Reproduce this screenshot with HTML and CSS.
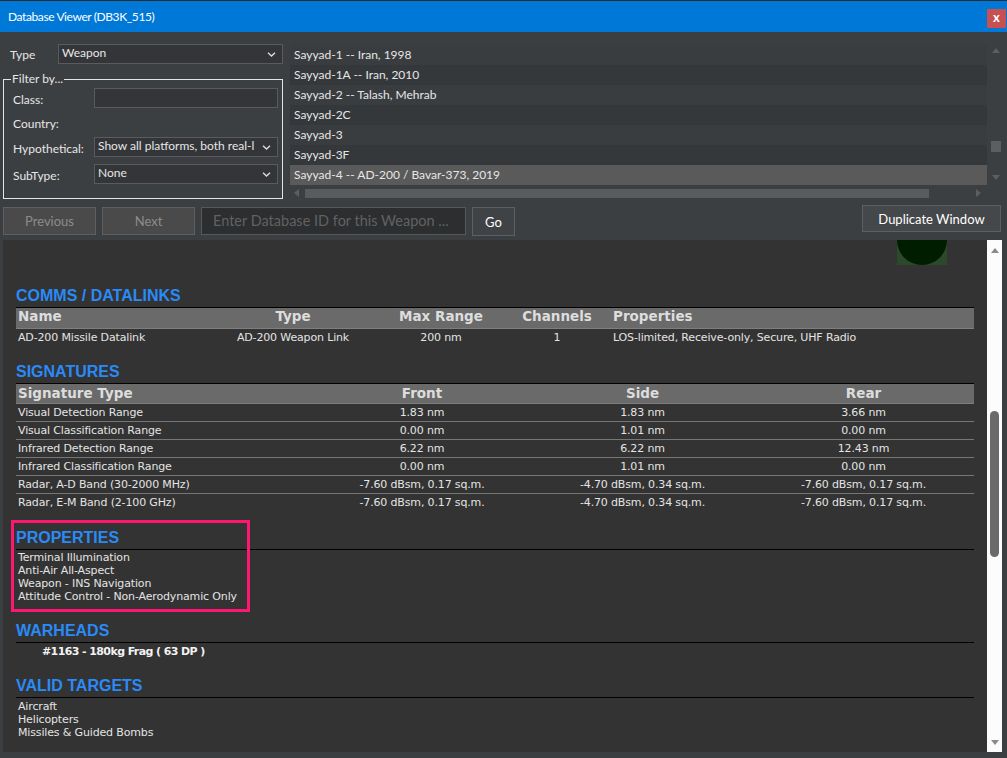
FILE: index.html
```html
<!DOCTYPE html>
<html>
<head>
    <title>Database Viewer (DB3K_515)</title>
    <link rel="stylesheet" href="styles.css">
</head>
<body>

<div class="window">
  <header class="titlebar">
    <span class="title">Database Viewer (DB3K_515)</span>
    <span class="close">x</span>
  </header>

  <section class="top">
    <div class="filters">
      <div class="type-row">
        <label>Type</label>
        <div class="combo">
          <span class="combo-text">Weapon</span>
          <svg class="chev" width="9" height="5" viewBox="0 0 9 5"><polyline points="1,0.8 4.5,4 8,0.8" fill="none" stroke="#dcdcdc" stroke-width="1.4"/></svg>
        </div>
      </div>

      <fieldset class="filter-box">
        <legend>Filter by...</legend>
        <div class="filter-grid">
          <label>Class:</label>
          <div class="field"></div>
          <label class="plain-label">Country:</label>
          <div></div>
          <label>Hypothetical:</label>
          <div class="combo">
            <span class="combo-text">Show all platforms, both real-l</span>
            <svg class="chev" width="9" height="5" viewBox="0 0 9 5"><polyline points="1,0.8 4.5,4 8,0.8" fill="none" stroke="#dcdcdc" stroke-width="1.4"/></svg>
          </div>
          <label>SubType:</label>
          <div class="combo">
            <span class="combo-text">None</span>
            <svg class="chev" width="9" height="5" viewBox="0 0 9 5"><polyline points="1,0.8 4.5,4 8,0.8" fill="none" stroke="#dcdcdc" stroke-width="1.4"/></svg>
          </div>
        </div>
      </fieldset>
    </div>

    <div class="list">
      <div class="list-main">
        <ul class="items">
          <li>Sayyad-1 -- Iran, 1998</li>
          <li>Sayyad-1A -- Iran, 2010</li>
          <li>Sayyad-2 -- Talash, Mehrab</li>
          <li>Sayyad-2C</li>
          <li>Sayyad-3</li>
          <li>Sayyad-3F</li>
          <li class="selected">Sayyad-4 -- AD-200 / Bavar-373, 2019</li>
        </ul>
        <div class="vbar">
          <span class="tri tri-up"></span>
          <span class="vthumb"></span>
          <span class="tri tri-down"></span>
        </div>
      </div>
      <div class="hbar">
        <span class="tri tri-left"></span>
        <span class="hthumb"></span>
        <span class="tri tri-right"></span>
      </div>
    </div>
  </section>

  <nav class="nav-row">
    <button class="btn btn-off">Previous</button>
    <button class="btn btn-off">Next</button>
    <div class="id-input">Enter Database ID for this Weapon ...</div>
    <button class="btn btn-go">Go</button>
    <button class="btn btn-dup">Duplicate Window</button>
  </nav>

  <section class="report">
    <div class="report-body">
      <div class="stub">
        <svg width="50" height="25" viewBox="0 0 50 25"><rect width="50" height="25" fill="#2c492c"/><circle cx="25" cy="0" r="25" fill="#001d00"/></svg>
      </div>

      <h3 class="sec-head first">COMMS / DATALINKS</h3>
      <table class="grid comms">
        <colgroup><col style="width:194px"><col style="width:166px"><col style="width:130px"><col style="width:102px"><col></colgroup>
        <tr><th class="left">Name</th><th>Type</th><th>Max Range</th><th>Channels</th><th class="left props">Properties</th></tr>
        <tr><td class="left">AD-200 Missile Datalink</td><td>AD-200 Weapon Link</td><td>200 nm</td><td>1</td><td class="left props">LOS-limited, Receive-only, Secure, UHF Radio</td></tr>
      </table>

      <h3 class="sec-head">SIGNATURES</h3>
      <table class="grid sig">
        <colgroup><col style="width:296px"><col style="width:220px"><col style="width:221px"><col></colgroup>
        <tr><th class="left">Signature Type</th><th>Front</th><th>Side</th><th>Rear</th></tr>
        <tr><td class="left">Visual Detection Range</td><td>1.83 nm</td><td>1.83 nm</td><td>3.66 nm</td></tr>
        <tr><td class="left">Visual Classification Range</td><td>0.00 nm</td><td>1.01 nm</td><td>0.00 nm</td></tr>
        <tr><td class="left">Infrared Detection Range</td><td>6.22 nm</td><td>6.22 nm</td><td>12.43 nm</td></tr>
        <tr><td class="left">Infrared Classification Range</td><td>0.00 nm</td><td>1.01 nm</td><td>0.00 nm</td></tr>
        <tr><td class="left">Radar, A-D Band (30-2000 MHz)</td><td>-7.60 dBsm, 0.17 sq.m.</td><td>-4.70 dBsm, 0.34 sq.m.</td><td>-7.60 dBsm, 0.17 sq.m.</td></tr>
        <tr><td class="left">Radar, E-M Band (2-100 GHz)</td><td>-7.60 dBsm, 0.17 sq.m.</td><td>-4.70 dBsm, 0.34 sq.m.</td><td>-7.60 dBsm, 0.17 sq.m.</td></tr>
      </table>

      <h3 class="sec-head">PROPERTIES</h3>
      <ul class="plain props-list">
        <li>Terminal Illumination</li>
        <li>Anti-Air All-Aspect</li>
        <li>Weapon - INS Navigation</li>
        <li>Attitude Control - Non-Aerodynamic Only</li>
      </ul>

      <h3 class="sec-head">WARHEADS</h3>
      <div class="warhead">#1163 - 180kg Frag ( 63 DP )</div>

      <h3 class="sec-head">VALID TARGETS</h3>
      <ul class="plain">
        <li>Aircraft</li>
        <li>Helicopters</li>
        <li>Missiles &amp; Guided Bombs</li>
      </ul>

      <div class="highlight"></div>
    </div>
    <div class="report-scroll">
      <span class="tri tri-up light"></span>
      <span class="rthumb"></span>
      <span class="tri tri-down light"></span>
    </div>
  </section>
</div>

</body>
</html>
```

FILE: styles.css
```css
* {
    box-sizing: border-box;
}
body {
    margin: 0;
    background-color: #3c3f41;
    font-family: "Lato", "Liberation Sans", sans-serif;
    font-size: 12px;
    color: #e6e6e6;
}
.window {
    width: 1007px;
    height: 758px;
    display: flex;
    flex-direction: column;
    overflow: hidden;
}

/* title bar */
.titlebar {
    height: 32px;
    border-top: 1px solid #2b2b2b;
    background-color: #0078d7;
    display: flex;
    align-items: center;
    padding-left: 8px;
    color: #fff;
}
.title {
    letter-spacing: -0.4px;
}
.close {
    align-self: flex-start;
    margin: 8px 1px 0 auto;
    width: 19px;
    height: 19px;
    background-color: #c75050;
    color: #fff;
    font-weight: bold;
    font-size: 13px;
    line-height: 17px;
    text-align: center;
}

/* top panel */
.top {
    display: flex;
    padding: 12px 2px 0 3px;
}
.filters {
    width: 280px;
    flex: none;
}
.type-row {
    display: flex;
    align-items: center;
    height: 20px;
}
.type-row label {
    margin-left: 7px;
    width: 48px;
}
.type-row .combo {
    flex: 1;
}
.combo, .field {
    height: 20px;
    border: 1px solid #595b5e;
    background-color: #333538;
}
.combo {
    display: flex;
    align-items: center;
    padding-left: 3px;
}
.combo-text {
    white-space: nowrap;
    line-height: 16px;
    margin-top: -2px;
}
.chev {
    margin-left: auto;
    margin-right: 6px;
    flex: none;
}
.filter-box {
    margin: 7px 0 0;
    border: 1px solid #e4e4e4;
    padding: 1px 4px 14px 9px;
}
.filter-box legend {
    padding: 0 1px;
    margin-left: -2px;
    line-height: 16px;
}
.filter-grid {
    display: grid;
    grid-template-columns: 81px 184px;
    grid-template-rows: 26px 23px 27px 20px;
    align-items: start;
}
.filter-grid label {
    line-height: 24px;
    height: 20px;
}
.filter-grid .plain-label {
    line-height: 20px;
}

/* list */
.list {
    flex: 1;
    margin: 1px 0 0 7px;
}
.list-main {
    display: flex;
    height: 140px;
}
.items {
    flex: 1;
    list-style: none;
    margin: 0;
    padding: 0;
}
.items li {
    height: 20px;
    line-height: 19px;
    padding-left: 4px;
    background-color: #3a3d40;
}
.items li:nth-child(even) {
    background-color: #35383b;
}
.items li.selected {
    background-color: #5a5a5a;
}
.vbar {
    width: 18px;
    display: flex;
    flex-direction: column;
    align-items: center;
}
.tri {
    display: block;
    width: 0;
    height: 0;
    border-style: solid;
    border-color: transparent;
}
.tri-up {
    margin-top: 3px;
    border-width: 0 4.5px 5px 4.5px;
    border-bottom-color: #5c5e60;
}
.tri-down {
    margin-top: auto;
    margin-bottom: 5px;
    border-width: 5px 4.5px 0 4.5px;
    border-top-color: #5c5e60;
}
.vthumb {
    width: 10px;
    height: 11px;
    margin-top: 88px;
    background-color: #5c5e60;
}
.hbar {
    width: 697px;
    height: 12px;
    margin-top: 2px;
    display: flex;
    align-items: center;
}
.tri-left {
    margin-left: 4px;
    border-width: 4.5px 5px 4.5px 0;
    border-right-color: #5c5e60;
}
.hthumb {
    width: 624px;
    height: 9px;
    margin-left: 6px;
    background-color: #595b5d;
}
.tri-right {
    margin-left: auto;
    margin-right: 6px;
    border-width: 4.5px 0 4.5px 5px;
    border-left-color: #5c5e60;
}

/* navigation row */
.nav-row {
    display: flex;
    align-items: flex-start;
    gap: 6px;
    margin-top: 8px;
    padding-left: 3px;
}
.btn {
    font-family: "Lato", "Liberation Sans", sans-serif;
    font-size: 13px;
    border: 1px solid #5d5f61;
    padding: 0;
    height: 28px;
}
.btn-off {
    width: 93px;
    background-color: #4a4a4a;
    color: #8c8c8c;
}
.id-input {
    width: 265px;
    height: 28px;
    border: 1px solid #56585a;
    background-color: #2d2e2f;
    color: #606264;
    font-size: 14.5px;
    line-height: 25px;
    padding-left: 11px;
    white-space: nowrap;
    overflow: hidden;
}
.btn-go {
    width: 43px;
    height: 29px;
    background-color: #404346;
    color: #fff;
}
.btn-dup {
    width: 139px;
    height: 27px;
    margin: -2px 6px 0 auto;
    background-color: #45484a;
    color: #fff;
}

/* report */
.report {
    display: flex;
    height: 512px;
    margin: 4px 5px 0 3px;
}
.report-body {
    flex: 1;
    position: relative;
    overflow: hidden;
    background-color: #333333;
    padding: 0 13px;
    font-family: "DejaVu Sans", sans-serif;
    font-size: 11px;
    letter-spacing: -0.15px;
    color: #e4e4e4;
}
.stub {
    display: flex;
    justify-content: flex-end;
    padding-right: 27px;
    height: 25px;
}
.sec-head {
    margin: 17px 0 0;
    font-family: "Liberation Sans", sans-serif;
    font-weight: bold;
    font-size: 16px;
    letter-spacing: 0;
    line-height: 18px;
    padding-bottom: 2px;
    color: #2a8af6;
    border-bottom: 1px solid #000;
}
.sec-head.first {
    margin-top: 22px;
}
.grid {
    width: 100%;
    table-layout: fixed;
    border-collapse: collapse;
}
.grid th {
    height: 20px;
    padding: 0 2px;
    background-color: #6a6a6a;
    color: #dddddd;
    font-size: 13.5px;
    letter-spacing: 0;
    font-weight: bold;
    text-align: center;
    white-space: nowrap;
    border-bottom: 1px solid #7e7e7e;
}
.grid td {
    padding: 0 2px;
    text-align: center;
    white-space: nowrap;
}
.grid .left {
    text-align: left;
}
.grid .props {
    padding-left: 5px;
}
.comms th {
    padding-bottom: 3px;
}
.comms td {
    height: 18px;
}
.sig th {
    height: 19px;
}
.sig td {
    height: 18px;
    border-bottom: 1px solid #767676;
}
.sig tr:last-child td {
    border-bottom: none;
}
.plain {
    list-style: none;
    margin: 0;
    padding: 2px 0 0 2px;
}
.sig + .sec-head {
    margin-top: 18px;
}
.plain li {
    line-height: 13px;
}
.props-list {
    padding: 1px 0 2px 2px;
}
.warhead {
    padding: 1px 0 0 26px;
    line-height: 16px;
    font-weight: bold;
    letter-spacing: -0.6px;
    color: #f2f2f2;
}
.highlight {
    position: absolute;
    left: 8px;
    top: 280px;
    width: 239px;
    height: 92px;
    border: 3px solid #ff1670;
}
.report-scroll {
    width: 15px;
    background-color: #fcfcfc;
    display: flex;
    flex-direction: column;
    align-items: center;
}
.report-scroll .tri-up {
    margin-top: 8px;
    border-bottom-color: #8a8a8a;
}
.report-scroll .tri-down {
    margin-bottom: 7px;
    border-top-color: #8a8a8a;
}
.rthumb {
    width: 9px;
    height: 146px;
    margin-top: 158px;
    border-radius: 5px;
    background-color: #6a6a6a;
}
```
